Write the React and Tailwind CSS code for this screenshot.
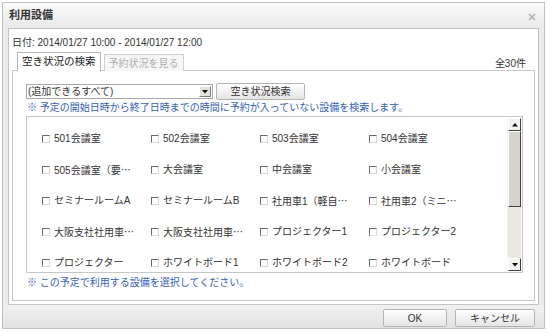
import React from "react";

const FONT = { fontFamily: '"Liberation Sans", "Noto Sans CJK JP", sans-serif' };
const CJK = { fontFamily: '"Noto Sans CJK JP", sans-serif' };

const items = [
  ["501会議室", "502会議室", "503会議室", "504会議室"],
  ["505会議室（要…", "大会議室", "中会議室", "小会議室"],
  ["セミナールームA", "セミナールームB", "社用車1（軽自…", "社用車2（ミニ…"],
  ["大阪支社社用車…", "大阪支社社用車…", "プロジェクター1", "プロジェクター2"],
  ["プロジェクター", "ホワイトボード1", "ホワイトボード2", "ホワイトボード"],
];

function Label({ text }) {
  const parts = text.split("…");
  return (
    <span className="whitespace-nowrap">
      {parts[0]}
      {parts.length > 1 && <span style={CJK}>…</span>}
    </span>
  );
}

function Check({ text }) {
  return (
    <div className="flex items-center h-[31px]">
      <span className="inline-block w-[8px] h-[8px] border-t border-l border-t-[#6a6a6a] border-l-[#6a6a6a] border-b border-r border-b-[#d8d8d8] border-r-[#d8d8d8] bg-white mr-[4px] shrink-0" />
      <Label text={text} />
    </div>
  );
}

function Btn({ children, className }) {
  return (
    <div
      className={
        "flex items-center justify-center border border-[#b4b4b4] rounded-[2px] bg-gradient-to-b from-[#ffffff] to-[#e4e4e4] text-[#333] " +
        className
      }
    >
      {children}
    </div>
  );
}

export default function App() {
  return (
    <div className="w-[547px] h-[333px] bg-white text-[10px] text-[#333] overflow-hidden" style={FONT}>
      <div className="ml-[2px] mt-[2px] w-[543px] h-[327px] border border-[#c2c2c2] bg-[#ececec] flex flex-col">
        {/* title bar */}
        <div className="h-[25px] flex items-center justify-between pl-[6px] pr-[8px] bg-gradient-to-b from-[#fbfbfb] to-[#e9e9e9]">
          <span className="font-bold text-[11px] text-[#333]">利用設備</span>
          <svg width="8" height="8" viewBox="0 0 8 8" className="mt-[2px]">
            <path d="M1 1 L7 7 M7 1 L1 7" stroke="#b0b0b0" strokeWidth="1.6" />
          </svg>
        </div>
        {/* content box */}
        <div className="mx-[5px] h-[277px] border border-[#c4c4c4] bg-white px-[2px] flex flex-col">
          <div className="mt-[5px] h-[18px] leading-[18px] pl-[1px] text-[#333]">
            日付: 2014/01/27 10:00 - 2014/01/27 12:00
          </div>
          {/* tabs */}
          <div className="flex items-end h-[19px] pl-[6px] pr-[8px] relative z-10">
            <div className="h-[19px] border border-b-0 border-[#b8b8b8] bg-white px-[4px] flex items-center text-[10.5px] text-[#222]">
              空き状況の検索
            </div>
            <div className="ml-[3px] h-[17px] border border-b-0 border-[#d0d0d0] bg-[#f6f6f6] px-[4px] flex items-center text-[#b0b0b0]">
              予約状況を見る
            </div>
            <div className="ml-auto self-center mt-[3px] mr-[2px] text-[#333]">全30件</div>
          </div>
          {/* tab panel */}
          <div className="mx-[1px] -mt-px h-[231px] border border-[#c8c8c8] pl-[13px] pt-[12px]">
            <div className="flex items-center h-[17px]">
              <div className="w-[187px] h-[15px] border border-[#a8a8a8] flex items-center justify-between pl-[1px] pr-[1px] bg-white">
                <span>(追加できるすべて)</span>
                <span className="w-[12px] h-[11px] bg-[#e6e3de] border border-t-white border-l-white border-b-[#808080] border-r-[#808080] flex items-center justify-center">
                  <svg width="6" height="4" viewBox="0 0 6 4">
                    <path d="M0 0 H6 L3 3.5 Z" fill="#111" />
                  </svg>
                </span>
              </div>
              <Btn className="ml-[3px] w-[89px] h-[17px]">空き状況検索</Btn>
            </div>
            <div className="h-[14px] leading-[14px] mt-[1px] pl-[1px] text-[#3261c0]">
              ※ 予定の開始日時から終了日時までの時間に予約が入っていない設備を検索します。
            </div>
            {/* list */}
            <div className="mt-[1px] w-[497px] h-[157px] border border-[#c6c6c6] flex">
              <div className="flex-1 overflow-hidden pl-[15px] pt-[6px]">
                {items.map((row, i) => (
                  <div key={i} className="grid grid-cols-[109px_109px_109px_109px]">
                    {row.map((t, j) => (
                      <Check key={j} text={t} />
                    ))}
                  </div>
                ))}
              </div>
              <div className="w-[14px] flex flex-col bg-[#ebe8e2] border-l border-[#f4f4f4] mt-[1px] mb-[1px] mr-[1px]">
                <div className="h-[13px] bg-[#f2f1ee] border border-t-white border-l-white border-b-[#404040] border-r-[#404040] flex items-center justify-center">
                  <svg width="6" height="4" viewBox="0 0 6 4">
                    <path d="M0 3.5 H6 L3 0 Z" fill="#111" />
                  </svg>
                </div>
                <div className="h-[76px] bg-[#d6d3cc] border border-t-white border-l-white border-b-[#404040] border-r-[#404040]" />
                <div className="flex-1" />
                <div className="h-[13px] bg-[#f2f1ee] border border-t-white border-l-white border-b-[#404040] border-r-[#404040] flex items-center justify-center">
                  <svg width="6" height="4" viewBox="0 0 6 4">
                    <path d="M0 0 H6 L3 3.5 Z" fill="#111" />
                  </svg>
                </div>
              </div>
            </div>
            <div className="mt-[3px] h-[14px] leading-[14px] pl-[1px] text-[#3261c0]">
              ※ この予定で利用する設備を選択してください。
            </div>
          </div>
        </div>
        {/* footer */}
        <div className="flex-1 bg-gradient-to-b from-[#f1f1f1] to-[#e2e2e2] flex items-start justify-end pt-[4px] pr-[9px] gap-[8px]">
          <Btn className="w-[64px] h-[18px]">OK</Btn>
          <Btn className="w-[80px] h-[18px]">キャンセル</Btn>
        </div>
      </div>
    </div>
  );
}
